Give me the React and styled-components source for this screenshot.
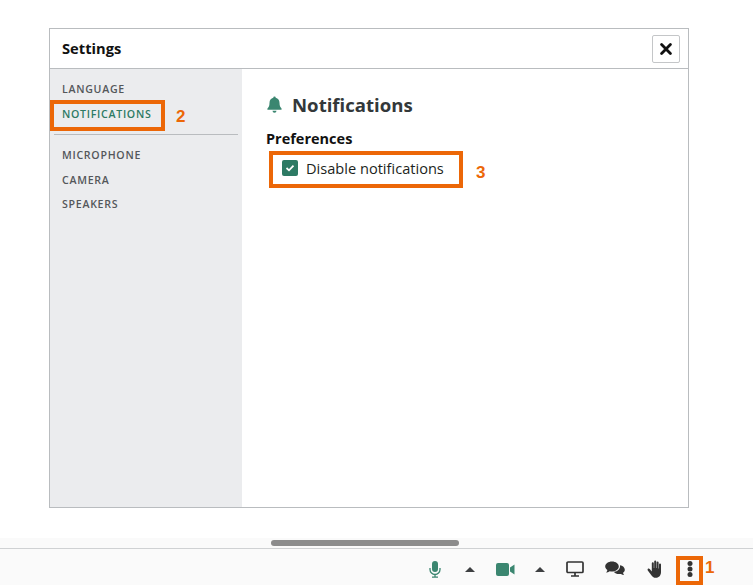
import React from 'react';
import styled, { createGlobalStyle } from 'styled-components';

const GlobalStyle = createGlobalStyle`
  html, body {
    margin: 0;
    padding: 0;
    background: #fff;
    font-family: "Open Sans", "Liberation Sans", sans-serif;
  }
`;

const Page = styled.div`
  width: 753px;
  height: 585px;
  display: flex;
  flex-direction: column;
  overflow: hidden;
`;

const Stage = styled.div`
  height: 538px;
  padding: 28px 0 0 49px;
  box-sizing: border-box;
`;

const Dialog = styled.div`
  width: 640px;
  height: 480px;
  box-sizing: border-box;
  border: 1px solid #b9bcbf;
  display: flex;
  flex-direction: column;
`;

const DialogHeader = styled.div`
  height: 40px;
  flex: none;
  box-sizing: border-box;
  border-bottom: 1px solid #b9bcbf;
  display: flex;
  align-items: center;
  justify-content: space-between;
  padding: 0 8px 0 12px;
`;

const DialogTitle = styled.div`
  margin-bottom: 2px;
  font-size: 14.7px;
  font-weight: 700;
  color: #111;
`;

const CloseButton = styled.button`
  width: 28px;
  height: 28px;
  padding: 0;
  background: #fff;
  border: 1px solid #c4c6c8;
  border-radius: 2px;
  display: flex;
  align-items: center;
  justify-content: center;
`;

const DialogBody = styled.div`
  flex: 1;
  display: flex;
  min-height: 0;
`;

const SideNav = styled.div`
  width: 192px;
  flex: none;
  background: #ebecee;
  padding: 11px 4px 0 4px;
  box-sizing: border-box;
`;

const NavItem = styled.div`
  position: relative;
  height: ${(p) => p.$h || 25}px;
  padding-left: 8px;
  font-size: 10.6px;
  line-height: 18px;
  font-weight: 600;
  letter-spacing: 0.72px;
  color: ${(p) => (p.$active ? '#2d7a64' : '#54575a')};
`;

const NavRule = styled.div`
  height: 1px;
  background: #b9bcbf;
  margin: 0 0 11px 0;
`;

const Content = styled.div`
  flex: 1;
  padding: 22px 24px 0;
`;

const Heading = styled.div`
  display: flex;
  align-items: center;
  gap: 9px;
  height: 26px;
  font-size: 18.6px;
  font-weight: 700;
  color: #33383a;
`;

const SubHeading = styled.div`
  margin-top: 12px;
  font-size: 14.5px;
  line-height: 20px;
  font-weight: 700;
  color: #111;
`;

const CheckRow = styled.label`
  position: relative;
  display: flex;
  align-items: center;
  gap: 8px;
  margin: 4px 0 0 16px;
  height: 30px;
  font-size: 14.6px;
  color: #1c1f21;
`;

const CheckBox = styled.span`
  width: 16px;
  height: 16px;
  background: #2d7a64;
  border-radius: 2px;
  display: flex;
  align-items: center;
  justify-content: center;
`;

const Callout = styled.div`
  position: absolute;
  box-sizing: border-box;
  border: 4px solid #ec6707;
  left: ${(p) => p.$l}px;
  top: ${(p) => p.$t}px;
  width: ${(p) => p.$w}px;
  height: ${(p) => p.$h}px;
  pointer-events: none;
`;

const CalloutNumber = styled.div`
  position: absolute;
  left: ${(p) => p.$l}px;
  top: ${(p) => p.$t}px;
  font-family: "Liberation Sans", Arial, sans-serif;
  font-size: 17px;
  line-height: 20px;
  font-weight: 700;
  letter-spacing: 0;
  color: #ec6707;
`;

const ScrollStrip = styled.div`
  height: 10px;
  flex: none;
  background: #fafafa;
  padding: 2px 0 0 271px;
  box-sizing: border-box;
`;

const ScrollThumb = styled.div`
  width: 188px;
  height: 6px;
  border-radius: 3px;
  background: #8c8c8c;
`;

const Toolbar = styled.div`
  flex: 1;
  position: relative;
  border-top: 1px solid #cfd1d3;
  background: #fafafa;
  display: flex;
  align-items: center;
  padding: 4px 0 0 426px;
  box-sizing: border-box;
`;

const ToolIcon = styled.div`
  width: ${(p) => p.$w}px;
  margin-right: ${(p) => p.$gap}px;
  height: 24px;
  flex: none;
  display: flex;
  align-items: center;
  justify-content: center;
`;

const Caret = () => (
  <svg width="10" height="5" viewBox="0 0 10 5"><path d="M5 0 10 5H0Z" fill="#3d3f41" /></svg>
);

export default function App() {
  return (
    <Page>
      <GlobalStyle />
      <Stage>
        <Dialog>
          <DialogHeader>
            <DialogTitle>Settings</DialogTitle>
            <CloseButton aria-label="Close">
              <svg width="12" height="12" viewBox="0 0 12 12">
                <path d="M1.6 1.6 10.4 10.4M10.4 1.6 1.6 10.4" stroke="#111" strokeWidth="2.8" strokeLinecap="round" />
              </svg>
            </CloseButton>
          </DialogHeader>
          <DialogBody>
            <SideNav>
              <NavItem>LANGUAGE</NavItem>
              <NavItem $active $h={29}>
                NOTIFICATIONS
                <Callout $l={-4} $t={-5} $w={115} $h={31} />
                <CalloutNumber $l={122} $t={2}>2</CalloutNumber>
              </NavItem>
              <NavRule />
              <NavItem>MICROPHONE</NavItem>
              <NavItem $h={24}>CAMERA</NavItem>
              <NavItem>SPEAKERS</NavItem>
            </SideNav>
            <Content>
              <Heading>
                <svg width="17" height="17" viewBox="0 0 16 17">
                  <path d="M8 0.5a1.2 1.2 0 0 1 1.2 1.3C11.6 2.3 13 4.2 13 6.8c0 3.4 1 4.6 2 5.6.4.5.2 1.3-.6 1.3H1.6c-.8 0-1-.8-.6-1.3 1-1 2-2.2 2-5.6 0-2.6 1.4-4.5 3.8-5A1.2 1.2 0 0 1 8 .5ZM6 14.7h4a2 2 0 0 1-4 0Z" fill="#3b8670" />
                </svg>
                Notifications
              </Heading>
              <SubHeading>Preferences</SubHeading>
              <CheckRow>
                <CheckBox>
                  <svg width="10" height="8" viewBox="0 0 10 8">
                    <path d="M1.5 4 4 6.3 8.5 1.6" fill="none" stroke="#fff" strokeWidth="1.8" />
                  </svg>
                </CheckBox>
                Disable notifications
                <Callout $l={-13} $t={-2} $w={194} $h={37} />
                <CalloutNumber $l={194} $t={10}>3</CalloutNumber>
              </CheckRow>
            </Content>
          </DialogBody>
        </Dialog>
      </Stage>
      <ScrollStrip>
        <ScrollThumb />
      </ScrollStrip>
      <Toolbar>
        <ToolIcon $w={18} $gap={20}>
          <svg width="12" height="17" viewBox="0 0 12 17">
            <rect x="3" y="0" width="6" height="11" rx="3" fill="#3b8670" />
            <path d="M1 7v1.5a5 5 0 0 0 10 0V7M6 13.5V16M3 16.2h6" fill="none" stroke="#3b8670" strokeWidth="1.3" />
          </svg>
        </ToolIcon>
        <ToolIcon $w={12} $gap={19}><Caret /></ToolIcon>
        <ToolIcon $w={20} $gap={19}>
          <svg width="19" height="13" viewBox="0 0 19 13">
            <rect x="0" y="0" width="13" height="13" rx="2" fill="#3b8670" />
            <path d="M14 4.600 18.500 1.500v10L14 8.400Z" fill="#3b8670" />
          </svg>
        </ToolIcon>
        <ToolIcon $w={12} $gap={20}><Caret /></ToolIcon>
        <ToolIcon $w={18} $gap={21}>
          <svg width="18" height="16" viewBox="0 0 18 16">
            <rect x="1" y="1" width="16" height="10.5" rx="1" fill="none" stroke="#333" strokeWidth="1.7" />
            <path d="M9 12v2.500M5 15h8" stroke="#333" strokeWidth="1.7" />
          </svg>
        </ToolIcon>
        <ToolIcon $w={20} $gap={21}>
          <svg width="20" height="16" viewBox="0 0 20 16">
            <path d="M7 0.5c3.800 0 6.800 2.200 6.800 5S10.800 10.500 7 10.500c-.8 0-1.500-.1-2.200-.3C3.700 11 2.300 11.500 1 11.600c.7-.8 1.200-1.700 1.400-2.700C1 8 .2 6.800.2 5.500.2 2.700 3.200.5 7 .5Z" fill="#333" />
            <path d="M15 4.300c2.800.5 4.800 2.300 4.800 4.400 0 1.200-.7 2.300-1.800 3.100.1.800.6 1.600 1.200 2.300-1.200-.1-2.400-.5-3.300-1.200-.6.100-1.200.2-1.800.2-2.300 0-4.300-.9-5.300-2.300 4.200-.2 6.600-3 6.200-6.500Z" fill="#333" />
          </svg>
        </ToolIcon>
        <ToolIcon $w={18} $gap={23}>
          <svg width="17" height="18" viewBox="0 0 17 18">
            <path d="M4.800 9V3.200a1 1 0 0 1 2 0V8h.4V1.600a1 1 0 0 1 2 0V8h.4V2.400a1 1 0 0 1 2 0V8.500h.4V4.400a1 1 0 0 1 2 0V12c0 3.300-2 5.800-5 5.800-2.400 0-3.800-1-5-3.100L.8 10.400c-.9-1.500.9-2.700 1.900-1.400L4.800 11.500Z" fill="#333" />
          </svg>
        </ToolIcon>
        <ToolIcon $w={6} $gap={0}>
          <svg width="6" height="16" viewBox="0 0 6 16">
            <circle cx="3" cy="2.500" r="2.500" fill="#333" />
            <circle cx="3" cy="8" r="2.500" fill="#333" />
            <circle cx="3" cy="13.500" r="2.500" fill="#333" />
          </svg>
        </ToolIcon>
        <Callout $l={676} $t={7} $w={27} $h={29} />
        <CalloutNumber $l={705} $t={9}>1</CalloutNumber>
      </Toolbar>
    </Page>
  );
}
